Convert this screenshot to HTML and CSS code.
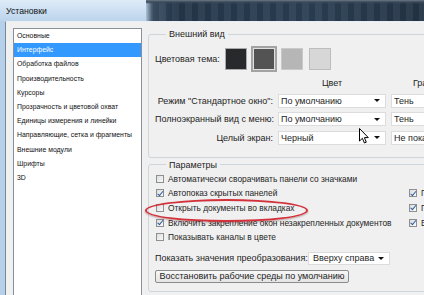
FILE: index.html
```html
<!DOCTYPE html>
<html lang="ru">
<head>
<meta charset="utf-8">
<title>Установки</title>
<link rel="stylesheet" href="styles.css">
</head>
<body>
<div class="window">
  <header class="titlebar">
    <div class="title">Установки</div>
    <div class="glass"></div>
  </header>
  <div class="frame">
    <div class="client">
      <ul class="nav">
        <li>Основные</li>
        <li class="active">Интерфейс</li>
        <li>Обработка файлов</li>
        <li>Производительность</li>
        <li>Курсоры</li>
        <li>Прозрачность и цветовой охват</li>
        <li>Единицы измерения и линейки</li>
        <li>Направляющие, сетка и фрагменты</li>
        <li>Внешние модули</li>
        <li>Шрифты</li>
        <li>3D</li>
      </ul>
      <div class="panel">
        <fieldset class="group look">
          <legend>Внешний вид</legend>
          <div class="theme-row">
            <span class="theme-label">Цветовая тема:</span>
            <div class="swatches">
              <span class="swatch s1"></span>
              <span class="swatch s2 selected"></span>
              <span class="swatch s3"></span>
              <span class="swatch s4"></span>
            </div>
          </div>
          <div class="grid">
            <span></span>
            <span class="colhead">Цвет</span>
            <span class="colhead second">Граница</span>
            <span class="rlabel">Режим "Стандартное окно":</span>
            <div class="select"><span>По умолчанию</span><i class="arrow"></i></div>
            <div class="select"><span>Тень</span><i class="arrow"></i></div>
            <span class="rlabel">Полноэкранный вид с меню:</span>
            <div class="select"><span>По умолчанию</span><i class="arrow"></i></div>
            <div class="select"><span>Тень</span><i class="arrow"></i></div>
            <span class="rlabel">Целый экран:</span>
            <div class="select"><span>Черный</span><i class="arrow"></i></div>
            <div class="select"><span>Не показывать</span><i class="arrow"></i></div>
          </div>
        </fieldset>
        <fieldset class="group params">
          <legend>Параметры</legend>
          <div class="checks">
            <div class="check"><span class="box"></span>Автоматически сворачивать панели со значками</div>
            <div></div>
            <div class="check"><span class="box on"></span>Автопоказ скрытых панелей</div>
            <div class="check"><span class="box on"></span>Показывать цвета меню</div>
            <div class="check"><span class="box"></span>Открыть документы во вкладках</div>
            <div class="check"><span class="box on"></span>Показывать подсказки</div>
            <div class="check"><span class="box on"></span>Включить закрепление окон незакрепленных документов</div>
            <div class="check"><span class="box on"></span>Включить жесты</div>
            <div class="check"><span class="box"></span>Показывать каналы в цвете</div>
            <div></div>
          </div>
          <div class="transform-row">
            <span class="transform-label">Показать значения преобразования:</span>
            <div class="select small"><span>Вверху справа</span><i class="arrow"></i></div>
          </div>
          <div class="btn-row">
            <span class="btn">Восстановить рабочие среды по умолчанию</span>
          </div>
        </fieldset>
      </div>
    </div>
  </div>
  <div class="ellipse"></div>
  <svg class="cursor" width="11" height="17" viewBox="0 0 11 17">
    <path d="M0.5 0.5 L0.5 13 L3.4 10.3 L5.4 15 L7.3 14.2 L5.4 9.6 L9.3 9.6 Z" fill="#fff" stroke="#000" stroke-width="1" stroke-linejoin="round"/>
  </svg>
</div>
</body>
</html>
```

FILE: styles.css
```css
* { box-sizing: border-box; }
html, body { margin: 0; padding: 0; }
body {
  width: 424px;
  height: 295px;
  overflow: hidden;
  background: #f0f0f0;
  font-family: "Liberation Sans", Arial, sans-serif;
  font-size: 9px;
  color: #1e1e1e;
}
.window {
  position: relative;
  width: 424px;
  height: 295px;
  display: flex;
  flex-direction: column;
  overflow: hidden;
}
.titlebar {
  height: 21px;
  display: flex;
  flex: none;
}
.title {
  width: 146px;
  padding-left: 6px;
  display: flex;
  align-items: center;
  font-size: 8.7px;
  color: #111;
  background: linear-gradient(#dfecf8, #c9ddf1 60%, #bcd4ec);
}
.glass {
  flex: 1;
  background:
    linear-gradient(#6d7884 0, #39495a 2px, rgba(0,0,0,0) 4px),
    repeating-linear-gradient(90deg, rgba(255,255,255,0.05) 0 7px, rgba(0,0,0,0.04) 7px 13px),
    linear-gradient(to right, #a7bdd3 0, #3d5064 6px, #24364a 30px, #2b3e52 60%, #223345);
}
.frame {
  flex: 1;
  display: flex;
  border-left: 5px solid #b6d0ea;
  min-height: 0;
}
.client {
  flex: 1;
  display: flex;
  align-items: flex-start;
  border-left: 1px solid #74889d;
  border-top: 1px solid #e8eef4;
  padding: 6px 0 0 7px;
  background: #f0f0f0;
}
.nav {
  list-style: none;
  margin: 0;
  padding: 0;
  width: 129px;
  height: 300px;
  flex: none;
  background: #fff;
  border: 1px solid #8a9099;
  font-size: 6.9px;
  color: #111;
}
.nav li {
  height: 14.2px;
  line-height: 14.2px;
  padding-left: 3px;
  white-space: nowrap;
}
.nav li.active {
  background: #3399ff;
  color: #fff;
}
.panel {
  margin-left: 6px;
  width: 330px;
  flex: none;
}
.group {
  margin: 0;
  padding: 0 0 8px 6px;
  border: 1px solid #cfd6db;
  border-radius: 3px;
  min-width: 0;
}
.group.look { padding-bottom: 12px; }
.group.params { margin-top: 1px; }
.group legend {
  margin-left: 11px;
  padding: 0 3px;
  line-height: 12px;
  height: 12px;
}
.theme-row {
  display: flex;
  align-items: center;
  margin-top: 8px;
  height: 22px;
}
.theme-label { width: 70px; }
.swatches { display: flex; gap: 6px; }
.swatch {
  width: 22px;
  height: 22px;
  border: 1px solid #b4b4b4;
}
.s1 { background: #27292d; border-color: #a9a9a9; }
.s2 { background: #535353; }
.s3 { background: #b6b6b6; border-color: #c9c9c9; }
.s4 { background: #d7d7d7; border-color: #bdbdbd; }
.swatch.selected {
  box-shadow: 0 0 0 2px #a3a3a3;
  border-color: #e0e0e0;
}
.grid {
  display: grid;
  grid-template-columns: 118px 108px 108px;
  grid-template-rows: 11px;
  grid-auto-rows: 14px;
  column-gap: 5px;
  row-gap: 4.5px;
  margin-top: 8px;
  align-items: center;
}
.colhead { text-align: center; line-height: 11px; }
.colhead.second { text-align: left; padding-left: 22px; }
.rlabel { text-align: right; white-space: nowrap; }
.select {
  height: 14px;
  background: #fff;
  border: 1px solid #dcdcdc;
  display: flex;
  align-items: center;
  justify-content: space-between;
  padding: 0 5px 0 2px;
  white-space: nowrap;
  overflow: hidden;
}
.arrow {
  width: 0;
  height: 0;
  border-left: 3px solid transparent;
  border-right: 3px solid transparent;
  border-top: 3px solid #111;
  flex: none;
}
.checks {
  display: grid;
  grid-template-columns: 253px auto;
  grid-auto-rows: 14.6px;
  margin-top: 1px;
  font-size: 8.4px;
}
.check {
  display: flex;
  align-items: center;
  white-space: nowrap;
}
.box {
  position: relative;
  width: 8px;
  height: 8px;
  margin: 0 4px 0 1px;
  flex: none;
  border: 1px solid #8e8f91;
  background: linear-gradient(135deg, #dcdcdc, #fafafa);
}
.box.on::after {
  content: "";
  position: absolute;
  left: 2px;
  top: -0.5px;
  width: 2px;
  height: 4.5px;
  border: solid #2c5aa0;
  border-width: 0 1.5px 1.5px 0;
  transform: rotate(40deg);
}
.transform-row {
  display: flex;
  align-items: center;
  margin-top: 7.5px;
  height: 13px;
}
.transform-label { width: 153px; white-space: nowrap; }
.select.small { width: 82px; height: 13px; padding-left: 4px; }
.btn-row { margin-top: 5px; display: flex; }
.btn {
  height: 13px;
  width: 194px;
  display: flex;
  align-items: center;
  justify-content: center;
  border: 1px solid #8c8c8c;
  border-radius: 2px;
  background: linear-gradient(#f7f7f7, #e4e4e4);
  white-space: nowrap;
}
.ellipse {
  position: absolute;
  left: 145px;
  top: 199px;
  width: 163px;
  height: 23px;
  border: 2px solid #d3303a;
  border-radius: 50%;
  box-shadow: 0 1px 2px rgba(90,0,0,0.35);
  pointer-events: none;
}
.cursor {
  position: absolute;
  left: 359px;
  top: 128px;
}
```
